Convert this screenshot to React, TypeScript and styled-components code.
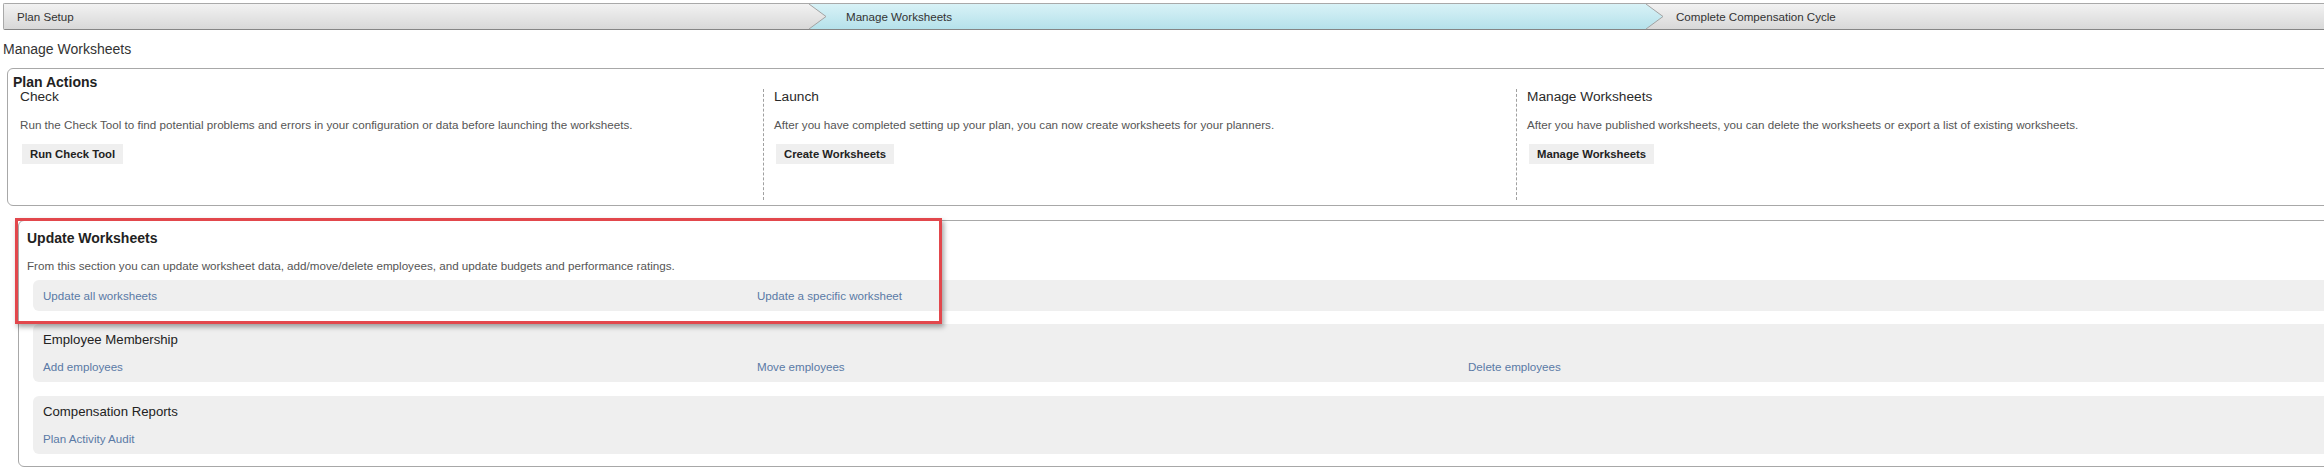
import React from "react";
import styled, { createGlobalStyle } from "styled-components";

const GlobalStyle = createGlobalStyle`
  html, body {
    margin: 0;
    padding: 0;
    background: #fff;
    overflow: hidden;
  }
  body {
    font-family: "Liberation Sans", Arial, sans-serif;
    color: #333;
  }
  * { box-sizing: border-box; }
`;

const Page = styled.div`
  position: relative;
  width: 2380px;
  padding: 3px 0 10px 3px;
`;

const StepBar = styled.div`
  display: flex;
  height: 27px;
  border-top: 1px solid #a9a9a9;
  border-bottom: 1px solid #858585;
  border-left: 1px solid #a9a9a9;
  border-radius: 2px 0 0 2px;
`;

const Step = styled.div<{ $active?: boolean; $width?: number; $pad: number }>`
  position: relative;
  flex: ${({ $width }) => ($width ? `0 0 ${$width}px` : "1 1 auto")};
  display: flex;
  align-items: center;
  padding-left: ${({ $pad }) => $pad}px;
  font-size: 11.6px;
  color: #333;
  background: ${({ $active }) =>
    $active
      ? "linear-gradient(#d8f2f7, #b5e1ea)"
      : "linear-gradient(#f2f2f2, #d8d8d8)"};
`;

const Chevron = styled.svg`
  position: absolute;
  top: 0;
  left: 100%;
  width: 18px;
  height: 100%;
  z-index: 1;
  overflow: visible;
`;

const PageTitle = styled.h1`
  margin: 10px 0 0;
  font-size: 14px;
  line-height: 18px;
  font-weight: normal;
  color: #333;
`;

const PanelBox = styled.section<{ $inset: number }>`
  margin-left: ${({ $inset }) => $inset}px;
  border: 1px solid #a8a8a8;
  border-radius: 6px;
`;

const ActionsBox = styled(PanelBox)`
  margin-top: 10px;
  padding: 6px 0 5px 5px;
`;

const UpdateBox = styled(PanelBox)`
  margin-top: 14px;
  padding: 9px 0 12px 8px;
`;

const BoxTitle = styled.h2<{ $lh: number }>`
  margin: 0;
  font-size: 14px;
  line-height: ${({ $lh }) => $lh}px;
  font-weight: bold;
  color: #222;
`;

const ActionColumns = styled.div`
  display: grid;
  grid-template-columns: 750px 753px 753px;
`;

const ActionColumn = styled.div<{ $first?: boolean }>`
  min-height: 111px;
  padding-left: ${({ $first }) => ($first ? 7 : 10)}px;
  border-left: ${({ $first }) => ($first ? "none" : "1px dashed #a0a0a0")};
`;

const ColumnTitle = styled.h3`
  margin: 0;
  font-size: 13.7px;
  line-height: 16px;
  font-weight: normal;
  color: #2a2a2a;
`;

const Description = styled.p<{ $top: number }>`
  margin: ${({ $top }) => $top}px 0 0;
  font-size: 11.65px;
  line-height: 14px;
  color: #555;
`;

const ActionButton = styled.button`
  display: block;
  margin: 12px 0 0 2px;
  height: 20px;
  padding: 0 8px;
  border: none;
  background: #efefef;
  font-family: inherit;
  font-size: 11.3px;
  font-weight: bold;
  color: #222;
`;

const LinkGroup = styled.div<{ $top: number }>`
  margin: ${({ $top }) => $top}px 0 0 6px;
  padding: 9px 0 8px 10px;
  background: #efefef;
  border-radius: 6px 0 0 6px;
`;

const GroupTitle = styled.h4`
  margin: -1px 0 12px;
  font-size: 13.2px;
  line-height: 16px;
  font-weight: normal;
  color: #222;
`;

const LinkGrid = styled.div`
  display: grid;
  grid-template-columns: 714px 711px 711px;
`;

const TextLink = styled.a`
  font-size: 11.6px;
  line-height: 14px;
  color: #5a7aa6;
  text-decoration: none;
`;

const Highlight = styled.div`
  position: absolute;
  left: 15px;
  top: 218px;
  width: 927px;
  height: 106px;
  border: 3px solid #e2474c;
  box-shadow: 2px 3px 5px rgba(0, 0, 0, 0.35);
  pointer-events: none;
`;

const steps = [
  { label: "Plan Setup", width: 805, pad: 13 },
  { label: "Manage Worksheets", width: 837, pad: 37, active: true },
  { label: "Complete Compensation Cycle", pad: 30 },
];

function StepArrow({ id, active }: { id: string; active?: boolean }) {
  return (
    <Chevron viewBox="0 0 18 25" preserveAspectRatio="none">
      <defs>
        <linearGradient id={id} x1="0" y1="0" x2="0" y2="1">
          <stop offset="0" stopColor={active ? "#d8f2f7" : "#f2f2f2"} />
          <stop offset="1" stopColor={active ? "#b5e1ea" : "#d8d8d8"} />
        </linearGradient>
      </defs>
      <polygon points="0,0 17,12.5 0,25" fill={`url(#${id})`} />
      <polyline
        points="0,0 17,12.5 0,25"
        fill="none"
        stroke="#a3a3a3"
        strokeWidth="1"
      />
    </Chevron>
  );
}

const actions = [
  {
    title: "Check",
    text: "Run the Check Tool to find potential problems and errors in your configuration or data before launching the worksheets.",
    button: "Run Check Tool",
  },
  {
    title: "Launch",
    text: "After you have completed setting up your plan, you can now create worksheets for your planners.",
    button: "Create Worksheets",
  },
  {
    title: "Manage Worksheets",
    text: "After you have published worksheets, you can delete the worksheets or export a list of existing worksheets.",
    button: "Manage Worksheets",
  },
];

const groups = [
  {
    title: "Employee Membership",
    links: ["Add employees", "Move employees", "Delete employees"],
  },
  { title: "Compensation Reports", links: ["Plan Activity Audit"] },
];

export default function App() {
  return (
    <>
      <GlobalStyle />
      <Page>
        <StepBar>
          {steps.map((s, i) => (
            <Step key={s.label} $active={s.active} $width={s.width} $pad={s.pad}>
              {s.label}
              {i < steps.length - 1 && (
                <StepArrow id={`step-grad-${i}`} active={s.active} />
              )}
            </Step>
          ))}
        </StepBar>

        <PageTitle>Manage Worksheets</PageTitle>

        <ActionsBox $inset={4}>
          <BoxTitle $lh={14}>Plan Actions</BoxTitle>
          <ActionColumns>
            {actions.map((a, i) => (
              <ActionColumn key={a.title} $first={i === 0}>
                <ColumnTitle>{a.title}</ColumnTitle>
                <Description $top={13}>{a.text}</Description>
                <ActionButton>{a.button}</ActionButton>
              </ActionColumn>
            ))}
          </ActionColumns>
        </ActionsBox>

        <UpdateBox $inset={15}>
          <BoxTitle $lh={16}>Update Worksheets</BoxTitle>
          <Description $top={13}>
            From this section you can update worksheet data, add/move/delete
            employees, and update budgets and performance ratings.
          </Description>
          <LinkGroup $top={7}>
            <LinkGrid>
              <TextLink href="#">Update all worksheets</TextLink>
              <TextLink href="#">Update a specific worksheet</TextLink>
            </LinkGrid>
          </LinkGroup>
          {groups.map((g, i) => (
            <LinkGroup key={g.title} $top={i === 0 ? 13 : 14}>
              <GroupTitle>{g.title}</GroupTitle>
              <LinkGrid>
                {g.links.map((l) => (
                  <TextLink key={l} href="#">
                    {l}
                  </TextLink>
                ))}
              </LinkGrid>
            </LinkGroup>
          ))}
        </UpdateBox>

        <Highlight />
      </Page>
    </>
  );
}
